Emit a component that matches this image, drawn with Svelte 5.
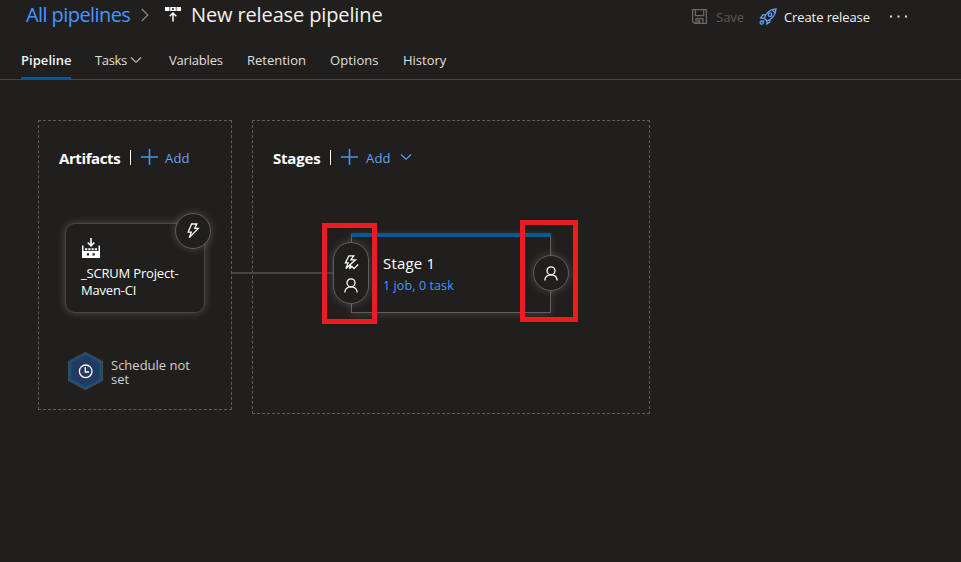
<script>
  const tabs = [
    { label: 'Pipeline', width: 50, gap: 24, active: true, spacing: 0.05 },
    { label: 'Tasks', width: 46, gap: 28, menu: true, spacing: -0.35 },
    { label: 'Variables', width: 54, gap: 24, spacing: -0.2 },
    { label: 'Retention', width: 59, gap: 24, spacing: 0 },
    { label: 'Options', width: 49, gap: 24, spacing: 0.1 },
    { label: 'History', width: 44, gap: 0, spacing: 0 },
  ];
</script>

{#snippet chevron()}
  <svg class="chev" width="12" height="8" viewBox="0 0 12 8"><path d="M1 1.500 6 6.300l5-4.800" /></svg>
{/snippet}

{#snippet plus()}
  <svg class="plus" width="17" height="17" viewBox="0 0 17 17"><path d="M8.500 0v16M0 8h17" /></svg>
{/snippet}

{#snippet person()}
  <svg class="person" width="14" height="15" viewBox="0 0 14 15"><circle cx="7" cy="4.800" r="4" /><path d="M.8 14.500c.3-3.400 2.700-5.700 6.200-5.700s5.900 2.300 6.200 5.700" /></svg>
{/snippet}

<div class="page">
  <header>
    <div class="crumbs">
      <a class="all">All pipelines</a>
      <svg class="sep" width="8" height="14" viewBox="0 0 8 14"><path d="m.8 1 6 6-6 6" /></svg>
      <svg class="pipe" width="16" height="15" viewBox="0 0 16 15">
        <path d="M0 0h4.500v4H0zM11.500 0H16v4h-4.500z" fill="#fff" />
        <path d="M5.200 0h5.600v4H5.200z" fill="#fff" /><path d="M7 1.200h2v1.500H7z" fill="#201f1e" />
        <path d="M8 14.500V6.200M4.700 9.300 8 6l3.300 3.300" fill="none" stroke="#fff" stroke-width="1.500" />
      </svg>
      <h1>New release pipeline</h1>
    </div>
    <div class="actions">
      <svg width="15" height="15" viewBox="0 0 15 15" class="disk"><path d="M.6 .6h13.800v13.800H2.600l-2-2zM3.300 .6v6h8.400v-6M4 14V9.600h7V14M6 14v-2.500h1.500V14" /></svg>
      <span class="save">Save</span>
      <svg class="rocket" width="18" height="17" viewBox="0 0 18 17">
        <path d="M5.300 10.300C6.700 5.400 10.500 1.400 17 .8c-.3 6.200-4.100 10.500-9 12zM6.600 6.800H3.800L1.600 10l3.700.3M10.900 11.300v2.600L7.800 16l.2-3.200M5.300 10.300 8 12.800M5.300 12.400l-1.500 1.500M13 1.700l3 3.100" />
        <circle cx="11" cy="6.700" r="1.800" /><circle cx="2.700" cy="14.600" r="1.600" />
      </svg>
      <span class="create">Create release</span>
      <svg class="more" width="17" height="3" viewBox="0 0 17 3"><path d="M0 .5h2v2H0zM7.500 .5h2v2h-2zM15 .5h2v2h-2z" /></svg>
    </div>
  </header>

  <nav>
    {#each tabs as tab}
      <div class="tab" class:active={tab.active} style="width:{tab.width}px;margin-right:{tab.gap}px;letter-spacing:{tab.spacing}px">
        <span>{tab.label}</span>
        {#if tab.menu}{@render chevron()}{/if}
      </div>
    {/each}
  </nav>

  <main>
    <section class="artifacts">
      <div class="head"><h2>Artifacts</h2><i class="bar"></i>{@render plus()}<span class="add">Add</span></div>
      <div class="card">
        <svg class="build" width="18" height="20" viewBox="0 0 18 20">
          <path fill-rule="evenodd" d="M0 7.500h1.500V13h15V7.500H18V20H0zM4.800 15.300v2.200H7v-2.200zM10.500 15.300v2.200h2.200v-2.200z" />
          <path d="M3 10.300h2.300v2H3zM6.300 10.300h2.300v2H6.300zM9.600 10.300h2.200v2H9.600zM12.800 10.300h2.200v2h-2.200z" />
          <path d="M9 0v7.200M5.700 4.500 9 7.800l3.300-3.300" fill="none" stroke="#fff" stroke-width="1.600" />
        </svg>
        <p>_SCRUM Project-<br />Maven-CI</p>
        <div class="node trigger">
          <svg width="12" height="16" viewBox="0 0 12 16"><path d="M4.600 1h5.200L7.700 5.400h3.500L2.300 14.600l2-5.500H1.200z" /></svg>
        </div>
      </div>
      <div class="schedule">
        <svg width="36" height="38" viewBox="0 0 36 38">
          <path d="M17.500 .7 34.200 9.800v18.400L17.500 37.300 .8 28.200V9.800z" fill="#243a5e" stroke="#484644" stroke-width="1.800" />
          <path d="M17.500 2.500 32.600 10.700v16.600L17.500 35.500 2.400 27.300V10.700z" fill="#243a5e" stroke="#005a9e" stroke-width="1.400" />
          <circle cx="17.700" cy="19.300" r="6.300" fill="none" stroke="#fff" stroke-width="1.300" />
          <path d="M17.300 15v5H21" fill="none" stroke="#fff" stroke-width="1.300" />
        </svg>
        <p>Schedule not<br />set</p>
      </div>
    </section>

    <section class="stages">
      <div class="head"><h2>Stages</h2><i class="bar"></i>{@render plus()}<span class="add">Add</span>{@render chevron()}</div>
      <div class="stage">
        <h3>Stage 1</h3>
        <a class="jobs">1 job, 0 task</a>
        <div class="node pre">
          <svg width="15" height="15" viewBox="0 0 15 15"><path d="M4.900 .8h4.800L6.900 4.800h4.600L1.900 13.600l2.200-5.700H1.400zM6.800 9.900 5.400 13.800l2.600-2.300 2 2.100 4.200-4.100" /></svg>
          {@render person()}
        </div>
        <div class="node post">{@render person()}</div>
      </div>
      <i class="link"></i>
      <i class="mark left"></i>
      <i class="mark right"></i>
    </section>
  </main>
</div>

<style>
  :global(body) { margin: 0; background: #201f1e; }
  .page { width: 961px; height: 562px; overflow: hidden; background: #201f1e; color: #fff; font-family: 'Open Sans', 'Noto Sans', sans-serif; font-size: 13px; }
  h1, h2, h3, p { margin: 0; font-weight: 400; }
  svg { display: block; flex: none; overflow: visible; }
  span, a, h1, h2, h3 { white-space: nowrap; }
  header { height: 40px; display: flex; justify-content: space-between; box-sizing: border-box; padding: 0 54px 0 26px; }
  .crumbs { display: flex; height: 28px; align-items: center; }
  .all { width: 105px; font-size: 20px; letter-spacing: -.58px; color: #4894fe; }
  .sep { margin-left: 10px; margin-top: 2px; fill: none; stroke: #8a8886; stroke-width: 1.200; }
  .pipe { margin-left: 16px; margin-top: 0; }
  h1 { margin-left: 10px; font-size: 20px; letter-spacing: -.13px; color: #f3f2f1; }
  .actions { display: flex; height: 34px; align-items: center; }
  .disk { fill: none; stroke: #6c6a68; stroke-width: 1.200; margin-top: -2px; }
  .save { width: 29px; margin-left: 9px; color: #5b5957; }
  .rocket { margin-left: 14px; margin-top: -2px; fill: none; stroke: #61a2ff; stroke-width: 1.300; }
  .create { width: 87px; margin-left: 7px; letter-spacing: -.1px; color: #f3f2f1; }
  .more { margin-left: 19px; margin-top: -2px; fill: #e1dfdd; }
  nav { height: 40px; box-sizing: border-box; display: flex; padding-left: 21px; border-bottom: 1px solid #484644; }
  .tab { height: 39px; box-sizing: border-box; display: flex; line-height: 40px; color: #e1dfdd; }
  .tab.active { font-weight: 600; color: #f3f2f1; border-bottom: 2px solid #005a9e; }
  .tab .chev { margin: 16px 0 0 3px; }
  .chev { fill: none; stroke: #c8c6c4; stroke-width: 1.100; }
  main { display: flex; align-items: flex-start; gap: 20px; padding: 40px 0 0 38px; }
  section { position: relative; box-sizing: border-box; border: 1px dashed #605e5c; }
  .artifacts { width: 194px; height: 290px; }
  .stages { width: 398px; height: 294px; }
  .head { height: 20px; padding: 27px 0 0 20px; display: flex; align-items: center; }
  h2 { font-size: 15px; font-weight: 700; letter-spacing: -.4px; line-height: 20px; width: 62px; }
  .stages h2 { width: 48px; letter-spacing: -.2px; }
  .bar { width: 1px; height: 15px; margin: -1px 0 0 9px; background: #fff; }
  .plus { margin-left: 10px; margin-top: -1px; stroke: #4894fe; stroke-width: 1.500; }
  .add { width: 25px; margin-left: 7px; color: #61a2ff; font-weight: 500; font-size: 13px; letter-spacing: .2px; }
  .stages .add { margin-left: 8px; }
  .head .chev { margin-left: 9px; margin-top: -2px; stroke: #61a2ff; }
  .card { position: relative; width: 140px; height: 90px; box-sizing: border-box; margin: 55px 0 0 26px; padding: 14px 0 0 15px; border: 1px solid #484644; border-radius: 10px; background: #201f1e; box-shadow: 0 0 9px rgba(255,255,255,.2); }
  .build { margin-left: 1px; fill: #fff; }
  .card p { margin-top: 7px; line-height: 17px; font-size: 13px; letter-spacing: -.18px; }
  .node { position: absolute; box-sizing: border-box; display: flex; flex-direction: column; align-items: center; justify-content: center; width: 36px; height: 36px; border: 1px solid #605e5c; border-radius: 18px; background: #201f1e; box-shadow: 0 0 9px rgba(255,255,255,.18); }
  .node svg { fill: none; stroke: #fff; stroke-width: 1.300; }
  .trigger { left: 109px; top: -11px; }
  .schedule { display: flex; margin: 39px 0 0 29px; }
  .schedule p { margin: 6px 0 0 7px; line-height: 14px; color: #d2d0ce; }
  .stage { position: relative; box-sizing: border-box; width: 200px; height: 80px; margin: 65px 0 0 98px; padding: 15px 0 0 31px; border: 1px solid #605e5c; border-top: 4px solid #005a9e; box-shadow: 0 2px 8px rgba(255,255,255,.12); }
  h3 { font-size: 15px; line-height: 22px; letter-spacing: .2px; }
  .jobs { display: block; font-size: 12.500px; line-height: 24px; letter-spacing: .1px; color: #4894fe; }
  .pre { left: -19px; top: 5px; height: 62px; gap: 8px; padding-top: 1px; }
  .post { right: -19px; top: 18px; }
  .link { position: absolute; left: -21px; top: 151px; width: 101px; height: 2px; background: #484644; }
  .mark { position: absolute; box-sizing: border-box; border: 5px solid #ed1c24; }
  .left { left: 69px; top: 102px; width: 55px; height: 101px; }
  .right { left: 267px; top: 99px; width: 58px; height: 102px; }
</style>
